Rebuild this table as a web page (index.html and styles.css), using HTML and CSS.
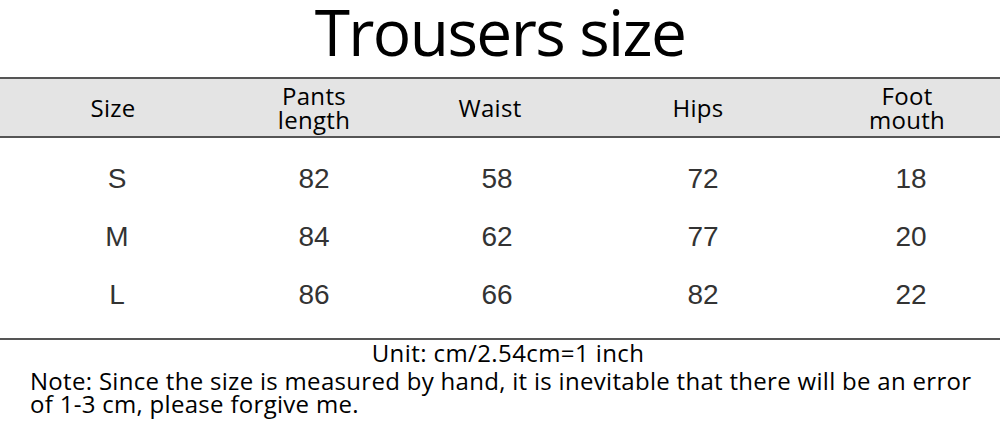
FILE: index.html
```html
<!DOCTYPE html>
<html>
<head>
<meta charset="utf-8">
<link rel="stylesheet" href="styles.css">
</head>
<body>
<div class="page">
  <h1 class="title">Trousers size</h1>
  <div class="table">
    <div class="row head">
      <div class="cell">Size</div>
      <div class="cell">Pants<br>length</div>
      <div class="cell">Waist</div>
      <div class="cell">Hips</div>
      <div class="cell">Foot<br>mouth</div>
    </div>
    <div class="body">
      <div class="row data">
        <div class="cell">S</div><div class="cell">82</div><div class="cell">58</div><div class="cell">72</div><div class="cell">18</div>
      </div>
      <div class="row data">
        <div class="cell">M</div><div class="cell">84</div><div class="cell">62</div><div class="cell">77</div><div class="cell">20</div>
      </div>
      <div class="row data">
        <div class="cell">L</div><div class="cell">86</div><div class="cell">66</div><div class="cell">82</div><div class="cell">22</div>
      </div>
    </div>
  </div>
  <p class="unit">Unit: cm/2.54cm=1 inch</p>
  <p class="note">Note: Since the size is measured by hand, it is inevitable that there will be an error of 1-3 cm, please forgive me.</p>
</div>
</body>
</html>
```

FILE: styles.css
```css
html, body {
  margin: 0;
  padding: 0;
  background: #ffffff;
}
.page {
  width: 1000px;
  height: 426px;
  overflow: hidden;
  font-family: "Open Sans", "Noto Sans", sans-serif;
  color: #000;
}
.title {
  margin: 0;
  height: 77px;
  font-weight: 400;
  font-size: 64px;
  line-height: 64px;
  padding-top: 0;
  text-align: center;
  letter-spacing: -1.6px;
}
.table {
  border-top: 2px solid #555;
  border-bottom: 2px solid #555;
}
.row {
  display: grid;
  grid-template-columns: 230px 168px 192px 220px 190px;
  align-items: center;
  text-align: center;
}
.head {
  height: 57px;
  background: #e4e4e4;
  border-bottom: 2px solid #555;
  font-size: 24px;
  line-height: 24px;
  letter-spacing: 0.3px;
}
.head .cell:nth-child(1) { padding-right: 4px; }
.head .cell:nth-child(3) { padding-right: 8px; }
.head .cell:nth-child(4) { padding-right: 4px; }
.head .cell:nth-child(5) { padding-left: 4px; }
.body {
  padding: 12px 0 14px;
}
.data {
  height: 58px;
  font-family: "Liberation Sans", Arial, sans-serif;
  font-size: 28px;
  color: #333;
}
.data .cell:nth-child(1) { padding-left: 4px; }
.data .cell:nth-child(3) { padding-left: 6px; }
.data .cell:nth-child(4) { padding-left: 6px; }
.data .cell:nth-child(5) { padding-left: 12px; }
.unit {
  margin: 0;
  padding-top: 1px;
  font-size: 24px;
  line-height: 24px;
  letter-spacing: 0.4px;
  text-align: center;
  padding-left: 16px;
}
.note {
  margin: 0;
  padding: 4px 20px 0 30px;
  font-size: 24px;
  line-height: 23px;
  letter-spacing: 0.3px;
}
```
